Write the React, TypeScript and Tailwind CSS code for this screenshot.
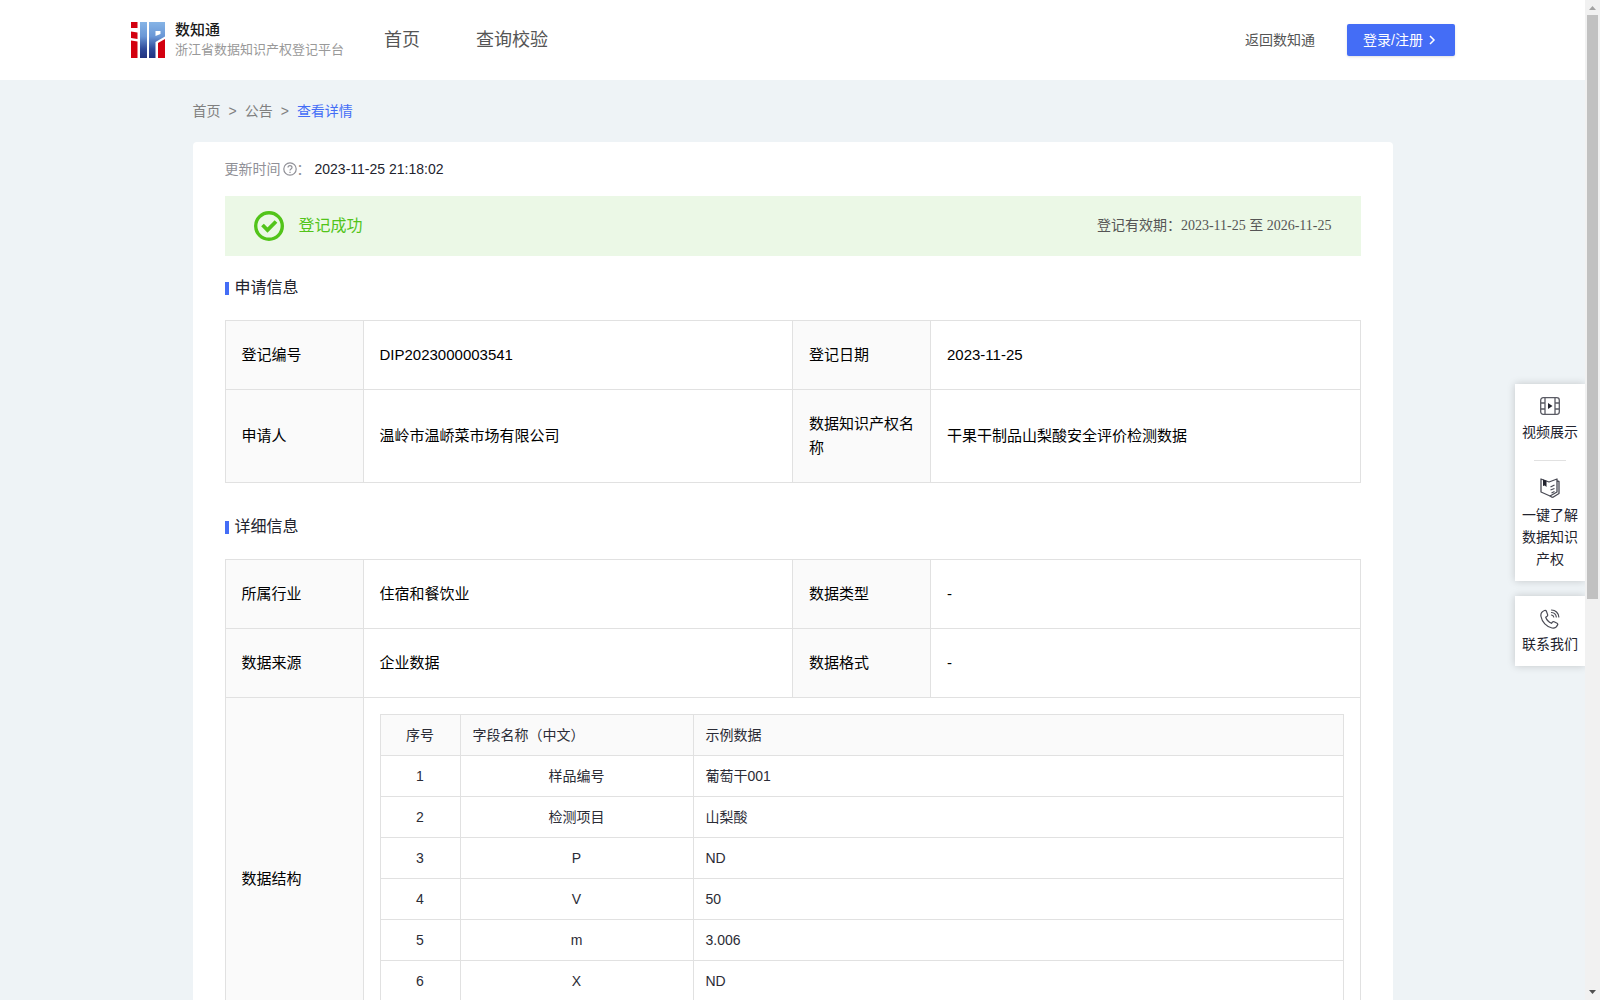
import type { ReactNode } from 'react';

const updateTime = '2023-11-25 21:18:02';

const fields = [
  { name: '样品编号', sample: '葡萄干001' },
  { name: '检测项目', sample: '山梨酸' },
  { name: 'P', sample: 'ND' },
  { name: 'V', sample: '50' },
  { name: 'm', sample: '3.006' },
  { name: 'X', sample: 'ND' },
  { name: '', sample: '' },
];

function Logo() {
  return (
    <svg width="34" height="36" viewBox="0 0 34 36" aria-hidden="true">
      <defs>
        <linearGradient id="logo-blue" gradientUnits="userSpaceOnUse" x1="0" y1="0" x2="0" y2="36">
          <stop offset="0" stopColor="#86b4e6" />
          <stop offset="0.4" stopColor="#6a97d6" />
          <stop offset="0.75" stopColor="#2f4a9a" />
          <stop offset="1" stopColor="#22327f" />
        </linearGradient>
      </defs>
      <path fill="#d3000f" d="M0 0h6.500v6H0zM0 9.500l6.500 1V17L0 16zM0 18.500l6.500 1V36H0z" />
      <path fill="url(#logo-blue)" d="M9 0h7v36H9z" />
      <path fill="url(#logo-blue)" fillRule="evenodd" d="M18 0h16v14.500L24.500 20v16H18zM24.500 9v5l5-2V9z" />
      <path fill="#d3000f" d="M27 21l7-4v19h-7z" />
    </svg>
  );
}

function VideoIcon() {
  return (
    <svg width="20" height="18" viewBox="0 0 20 18" fill="none" stroke="#5a5b64" strokeWidth="1.300" aria-hidden="true">
      <rect x="0.700" y="0.700" width="18.600" height="16.600" rx="2.500" />
      <path d="M5 1v16M15 1v16M1 6h4M1 12h4M15 6h4M15 12h4" />
      <path d="M8 6l4.500 3L8 12z" fill="#22232e" stroke="none" />
    </svg>
  );
}

function BookIcon() {
  return (
    <svg width="20" height="20" viewBox="0 0 20 20" fill="none" stroke="#4a4b55" strokeWidth="1.300" strokeLinejoin="round" aria-hidden="true">
      <path d="M1 1l8 3 8-3v13l-7 4-9-4z" />
      <path d="M17 3l2 .5v12l-6.500 4M10 18l2.500 1.500" />
      <path d="M10.500 9L14.500 7M10.500 12L14.500 10.500M11.500 15L14.500 13.500" />
      <path d="M3 1.500l3.500 1.200V9L4.800 7.500 3 8z" fill="#22232e" stroke="none" />
    </svg>
  );
}

function PhoneIcon() {
  return (
    <svg width="20" height="20" viewBox="0 0 20 20" fill="none" stroke="#4a4b55" strokeWidth="1.200" strokeLinecap="round" strokeLinejoin="round" aria-hidden="true">
      <path d="M4.500 1.500C2 2.500.5 5 1 7.500c1 5.500 5.500 10.500 11 11.500 2.500.4 4.800-1 5.700-3.200.2-.7 0-1.300-.6-1.600l-3-1.500c-.6-.3-1.300-.1-1.700.4l-.9 1.200C8.700 13 6.500 10.500 5.700 8.200l1.400-1c.5-.4.700-1 .5-1.600L6.400 2.200c-.3-.7-1.100-1-1.900-.7z" />
      <path d="M11.500 1c4 0 7 3 7.300 7M11.500 3.500c2.600.2 4.500 2 4.800 4.500M11.500 6c1.200.2 2 .9 2.200 2" />
    </svg>
  );
}

function SectionTitle({ children }: { children: ReactNode }) {
  return (
    <h2 className="mb-5 flex items-center gap-1.5 text-base leading-6 text-[#22232e]">
      <span className="mt-px h-[13px] w-1 bg-[#446df6]" />
      {children}
    </h2>
  );
}

function LabelCell({ children }: { children: ReactNode }) {
  return (
    <th scope="row" className="border border-[#e1e1e1] bg-[#fafafa] px-4 py-[22px] text-left font-normal">
      {children}
    </th>
  );
}

function ValueCell({ children }: { children: ReactNode }) {
  return <td className="border border-[#e1e1e1] px-4 py-[22px]">{children}</td>;
}

function InfoTable({ children }: { children: ReactNode }) {
  return (
    <table className="w-full table-fixed border-collapse text-[15px] leading-6 text-black">
      <colgroup>
        <col className="w-[138px]" />
        <col />
        <col className="w-[138px]" />
        <col />
      </colgroup>
      <tbody>{children}</tbody>
    </table>
  );
}

function FieldTable() {
  return (
    <table className="w-full table-fixed border-collapse text-sm leading-5 text-[#2b2c36]">
      <colgroup>
        <col className="w-20" />
        <col className="w-[233px]" />
        <col />
      </colgroup>
      <thead className="bg-[#fafafa]">
        <tr>
          <th className="border border-[#e1e1e1] px-3 py-2.5 font-normal">序号</th>
          <th className="border border-[#e1e1e1] px-3 py-2.5 text-left font-normal">字段名称（中文）</th>
          <th className="border border-[#e1e1e1] px-3 py-2.5 text-left font-normal">示例数据</th>
        </tr>
      </thead>
      <tbody>
        {fields.map((field, index) => (
          <tr key={index} className="h-[41px]">
            <td className="border border-[#e1e1e1] px-3 py-2.5 text-center">{field.name && index + 1}</td>
            <td className="border border-[#e1e1e1] px-3 py-2.5 text-center">{field.name}</td>
            <td className="border border-[#e1e1e1] px-3 py-2.5">{field.sample}</td>
          </tr>
        ))}
      </tbody>
    </table>
  );
}

function Header() {
  return (
    <header className="flex h-20 items-center bg-white pr-[130px] pl-[131px] text-[#555]">
      <a href="#" className="flex items-center gap-2.5">
        <Logo />
        <span className="flex flex-col">
          <span className="text-[15px] leading-5 font-medium text-[#1a1a1a]">数知通</span>
          <span className="text-[13px] leading-5 text-[#999]">浙江省数据知识产权登记平台</span>
        </span>
      </a>
      <nav className="ml-10 flex gap-14 text-lg leading-6">
        <a href="#">首页</a>
        <a href="#">查询校验</a>
      </nav>
      <a href="#" className="ml-auto text-sm">返回数知通</a>
      <button className="ml-8 flex h-8 w-[108px] items-center gap-1 rounded-xs bg-[#446df6] pl-4 text-sm text-white shadow-sm">
        登录/注册
        <svg width="10" height="10" viewBox="0 0 10 10" fill="none" stroke="currentColor" strokeWidth="1.500" aria-hidden="true">
          <path d="M3 1l4 4-4 4" />
        </svg>
      </button>
    </header>
  );
}

function SidePanel() {
  return (
    <aside className="absolute top-96 right-0 flex w-[70px] flex-col gap-[15px] text-center text-sm leading-[22px] text-[#22232e]">
      <div className="flex flex-col items-center bg-white px-1.5 pt-[13px] pb-[11px] shadow-[0_0_8px_rgba(0,0,0,0.18)]">
        <a href="#" className="flex flex-col items-center gap-1.5">
          <VideoIcon />
          <span className="whitespace-nowrap">视频展示</span>
        </a>
        <span className="my-[17px] h-px w-8 bg-[#e1e1e1]" />
        <a href="#" className="flex flex-col items-center gap-1.5">
          <BookIcon />
          <span className="w-14">一键了解数据知识产权</span>
        </a>
      </div>
      <a href="#" className="flex flex-col items-center gap-1 bg-white pt-[13px] pb-[11px] shadow-[0_0_8px_rgba(0,0,0,0.18)]">
        <PhoneIcon />
        <span className="whitespace-nowrap">联系我们</span>
      </a>
    </aside>
  );
}

function ScrollBar() {
  return (
    <div className="flex w-[15px] shrink-0 flex-col items-center bg-[#f1f1f1]">
      <svg width="15" height="15" viewBox="0 0 15 15" aria-hidden="true">
        <path d="M4 10h7L7.500 6z" fill="#a3a3a3" />
      </svg>
      <div className="h-[584px] w-[11px] bg-[#c1c1c1]" />
      <svg className="mt-auto" width="15" height="15" viewBox="0 0 15 15" aria-hidden="true">
        <path d="M4 5h7L7.500 9z" fill="#505050" />
      </svg>
    </div>
  );
}

export default function App() {
  return (
    <div className="flex h-screen overflow-hidden bg-[#eef3f6] font-['Liberation_Sans','Noto_Sans_CJK_SC',sans-serif]">
      <div className="relative min-w-0 flex-1 overflow-hidden">
        <Header />
        <main className="mx-auto max-w-[1200px]">
          <nav className="flex h-[62px] items-center gap-2 text-sm text-[#808080]">
            <a href="#">首页</a>
            <span>&gt;</span>
            <a href="#">公告</a>
            <span>&gt;</span>
            <a href="#" className="text-[#446df6]">查看详情</a>
          </nav>

          <div className="rounded-sm bg-white px-8 pb-8">
            <div className="flex h-[54px] items-center text-sm text-[#22232e]">
              <span className="text-[#909097]">更新时间</span>
              <svg className="ml-0.5" width="14" height="14" viewBox="0 0 14 14" fill="none" stroke="#909097" strokeWidth="1.200" aria-hidden="true">
                <circle cx="7" cy="7" r="6.200" />
                <path d="M5 5.600c0-2.700 4-2.600 4-.2C9 7 7 6.900 7 8.500M7 9.700V11" />
              </svg>
              <span className="mr-1 text-[#909097]">：</span>
              <span>{updateTime}</span>
            </div>

            <div className="flex h-[60px] items-center bg-[#ebf8e6] px-[29px]">
              <svg width="30" height="30" viewBox="0 0 30 30" fill="none" stroke="#52c41a" aria-hidden="true">
                <circle cx="15" cy="15" r="13.300" strokeWidth="3.400" />
                <path d="M8.500 14l5 5 8.500-8.500" strokeWidth="3.800" />
              </svg>
              <span className="ml-[15px] text-base text-[#52c41a]">登记成功</span>
              <span className="ml-auto font-['Liberation_Serif','Noto_Sans_CJK_SC',serif] text-sm text-[#555]">
                登记有效期：2023-11-25 至 2026-11-25
              </span>
            </div>

            <section className="pt-5">
              <SectionTitle>申请信息</SectionTitle>
              <InfoTable>
                <tr>
                  <LabelCell>登记编号</LabelCell>
                  <ValueCell>DIP2023000003541</ValueCell>
                  <LabelCell>登记日期</LabelCell>
                  <ValueCell>2023-11-25</ValueCell>
                </tr>
                <tr>
                  <LabelCell>申请人</LabelCell>
                  <ValueCell>温岭市温峤菜市场有限公司</ValueCell>
                  <LabelCell>数据知识产权名称</LabelCell>
                  <ValueCell>干果干制品山梨酸安全评价检测数据</ValueCell>
                </tr>
              </InfoTable>
            </section>

            <section className="pt-8">
              <SectionTitle>详细信息</SectionTitle>
              <InfoTable>
                <tr>
                  <LabelCell>所属行业</LabelCell>
                  <ValueCell>住宿和餐饮业</ValueCell>
                  <LabelCell>数据类型</LabelCell>
                  <ValueCell>-</ValueCell>
                </tr>
                <tr>
                  <LabelCell>数据来源</LabelCell>
                  <ValueCell>企业数据</ValueCell>
                  <LabelCell>数据格式</LabelCell>
                  <ValueCell>-</ValueCell>
                </tr>
                <tr>
                  <LabelCell>数据结构</LabelCell>
                  <td colSpan={3} className="border border-[#e1e1e1] p-4">
                    <FieldTable />
                  </td>
                </tr>
              </InfoTable>
            </section>
          </div>
        </main>
        <SidePanel />
      </div>
      <ScrollBar />
    </div>
  );
}
